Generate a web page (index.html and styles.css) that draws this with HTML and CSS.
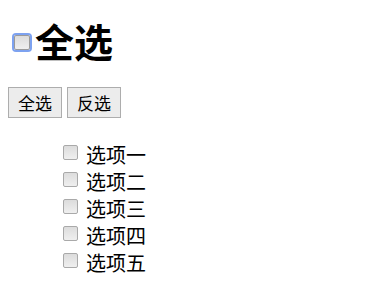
FILE: index.html
```html
<!DOCTYPE html>
<html>
<head>
<meta charset="utf-8">
<link rel="stylesheet" href="styles.css">
</head>
<body>
<h1 class="title"><span class="box box-focus"></span><span>全选</span></h1>
<div class="buttons">
  <button class="btn">全选</button>
  <button class="btn">反选</button>
</div>
<ul class="list">
  <li class="item"><span class="box"></span><span>选项一</span></li>
  <li class="item"><span class="box"></span><span>选项二</span></li>
  <li class="item"><span class="box"></span><span>选项三</span></li>
  <li class="item"><span class="box"></span><span>选项四</span></li>
  <li class="item"><span class="box"></span><span>选项五</span></li>
</ul>
</body>
</html>
```
FILE: styles.css
```css
html, body { background: #fff; }
body {
  margin: 8px;
  font-family: "Noto Sans CJK SC", "Noto Sans", sans-serif;
  color: #000;
}
.title {
  display: flex;
  align-items: center;
  margin: 0;
  padding-top: 10px;
  height: 44px;
  font-size: 39px;
  font-weight: bold;
  line-height: 44px;
}
.title .box { margin: 4px 5px 0 6px; }
.box {
  display: inline-block;
  box-sizing: border-box;
  width: 15px;
  height: 15px;
  border: 1px solid #a9a9a9;
  border-radius: 2px;
  background: linear-gradient(#dcdcdc, #efefef);
  flex: none;
}
.box-focus {
  width: 16px;
  height: 15px;
  box-shadow: 0 0 0 2px #7da2f0;
  border-color: #9a9a9a;
}
.buttons {
  display: flex;
  gap: 5px;
  margin-top: 25px;
}
.btn {
  font-family: "Noto Sans CJK SC", sans-serif;
  font-size: 17px;
  line-height: 20px;
  height: 31px;
  padding: 0 9px;
  border: 1px solid #adadad;
  border-radius: 0;
  background: #ececec;
  color: #000;
}
.list {
  list-style: none;
  margin: 23px 0 0 0;
  padding: 0 0 0 55px;
  font-size: 20px;
}
.item {
  display: flex;
  align-items: center;
  height: 27px;
  gap: 8px;
}
.item .box { margin-top: -5px; }
```
